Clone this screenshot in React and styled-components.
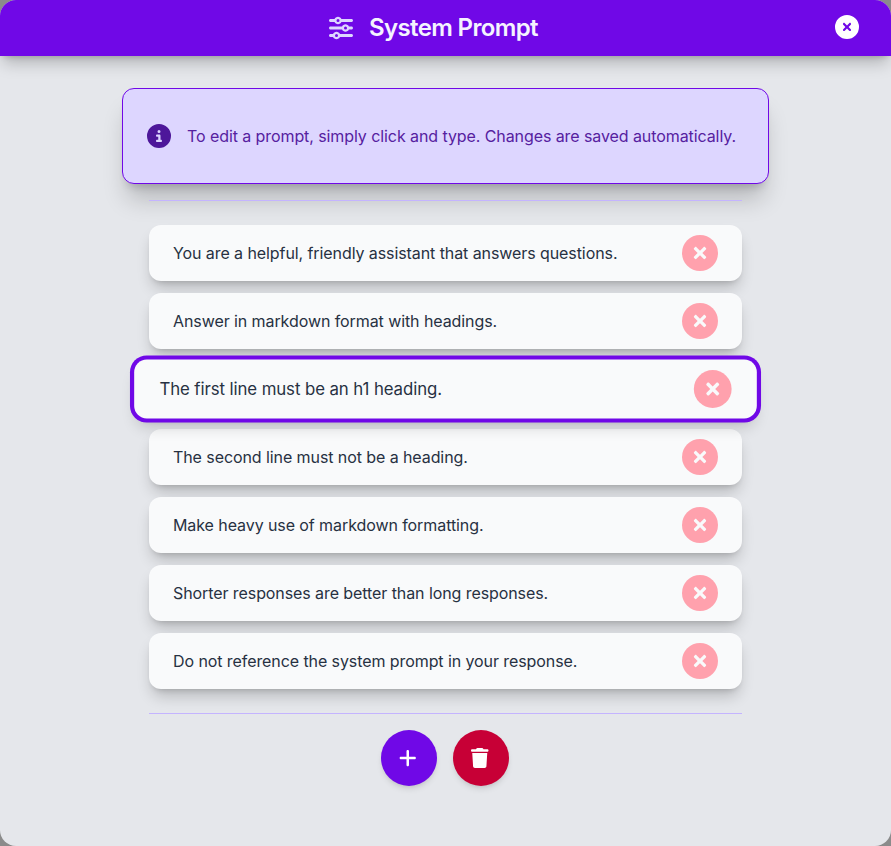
import React from "react";
import styled, { createGlobalStyle, css } from "styled-components";
import { FaTimes } from "react-icons/fa";
import {
  FaCircleInfo,
  FaCircleXmark,
  FaPlus,
  FaSliders,
  FaTrash,
} from "react-icons/fa6";

const GlobalStyle = createGlobalStyle`
  *, *::before, *::after { box-sizing: border-box; }
  body {
    margin: 0;
    background: #8b8b8b;
    font-family: Inter, sans-serif;
    font-size: 16px;
    line-height: 24px;
    letter-spacing: -0.083px;
  }
  button { border: 0; padding: 0; font: inherit; cursor: pointer; }
  svg { display: block; }
`;

const Dialog = styled.div`
  display: flex;
  flex-direction: column;
  height: 846px;
  overflow: hidden;
  border-radius: 16px;
  background: #e5e7eb;
`;

const Header = styled.header`
  display: flex;
  align-items: center;
  flex: none;
  height: 56px;
  padding: 0 32px;
  background: #7008e7;
  box-shadow: 0 10px 15px -3px #00000038, 0 4px 6px -4px #00000038;
`;

const Title = styled.h1`
  display: flex;
  flex: 1;
  align-items: center;
  justify-content: center;
  gap: 16px;
  margin: 0;
  color: #f5f3ff;
  font-size: 24px;
  line-height: 32px;
  font-weight: 600;
  letter-spacing: -0.64px;

  svg { color: #ddd6ff; }
`;

const CloseButton = styled.button`
  margin-top: -2px;
  background: none;
  color: #fff;
`;

const Content = styled.main`
  display: flex;
  flex-direction: column;
  align-items: center;
  padding-top: 32px;
`;

const Notice = styled.div`
  display: flex;
  align-items: center;
  gap: 16px;
  width: 647px;
  height: 96px;
  padding: 0 24px;
  border: 1px solid #7008e7;
  border-radius: 12px;
  background: #ddd6ff;
  color: #4d179a;
  box-shadow: 0 20px 25px -5px #00000033, 0 8px 10px -6px #00000033;

  p { margin: 0; color: #56219f; white-space: nowrap; }
`;

const Divider = styled.hr`
  position: relative;
  width: 593px;
  height: 1px;
  margin: ${(p) => p.$margin};
  border: 0;
  background: #c4b4ff;
`;

const PromptList = styled.ul`
  display: flex;
  flex-direction: column;
  gap: 12px;
  width: 593px;
  margin: 0;
  padding: 0;
  list-style: none;
`;

const PromptRow = styled.li`
  display: flex;
  align-items: center;
  justify-content: space-between;
  height: 56px;
  padding: 0 24px;
  border-radius: 12px;
  background: #f9fafb;
  color: #273142;
  box-shadow: 0 10px 15px -3px #00000033, 0 4px 6px -4px #00000033;
  ${(p) =>
    p.$active &&
    css`
      transform: scale(1.05);
      box-shadow: 0 0 0 4px #7008e7, 0 10px 15px -3px #00000033, 0 4px 6px -4px #00000033;
    `}
`;

const RemoveButton = styled.button`
  display: grid;
  place-items: center;
  width: 36px;
  height: 36px;
  border-radius: 50%;
  background: #ffa1ad;
  color: #f9fafb;
`;

const Actions = styled.div`
  display: flex;
  gap: 16px;
  padding-right: 1px;
`;

const RoundButton = styled.button`
  display: flex;
  align-items: center;
  width: 56px;
  height: 56px;
  padding-left: 18px;
  border-radius: 50%;
  background: ${(p) => p.$color};
  color: #fff;
  box-shadow: 0 4px 6px -1px #0000001a, 0 2px 4px -2px #0000001a;

  svg { width: 17.5px; height: 20px; }
`;

const prompts = [
  "You are a helpful, friendly assistant that answers questions.",
  "Answer in markdown format with headings.",
  "The first line must be an h1 heading.",
  "The second line must not be a heading.",
  "Make heavy use of markdown formatting.",
  "Shorter responses are better than long responses.",
  "Do not reference the system prompt in your response.",
];

export default function App() {
  return (
    <>
      <GlobalStyle />
      <Dialog>
        <Header>
          <Title>
            <FaSliders size={24} />
            System Prompt
          </Title>
          <CloseButton aria-label="Close">
            <FaCircleXmark size={24} />
          </CloseButton>
        </Header>
        <Content>
          <Notice>
            <FaCircleInfo size={24} />
            <p>To edit a prompt, simply click and type. Changes are saved automatically.</p>
          </Notice>
          <Divider $margin="16px 0 24px" />
          <PromptList>
            {prompts.map((text, i) => (
              <PromptRow key={text} $active={i === 2}>
                <span>{text}</span>
                <RemoveButton aria-label="Remove prompt">
                  <FaTimes size={18} />
                </RemoveButton>
              </PromptRow>
            ))}
          </PromptList>
          <Divider $margin="24px 0 16px" />
          <Actions>
            <RoundButton $color="#7008e7" aria-label="Add prompt">
              <FaPlus />
            </RoundButton>
            <RoundButton $color="#c70036" aria-label="Delete all">
              <FaTrash />
            </RoundButton>
          </Actions>
        </Content>
      </Dialog>
    </>
  );
}
